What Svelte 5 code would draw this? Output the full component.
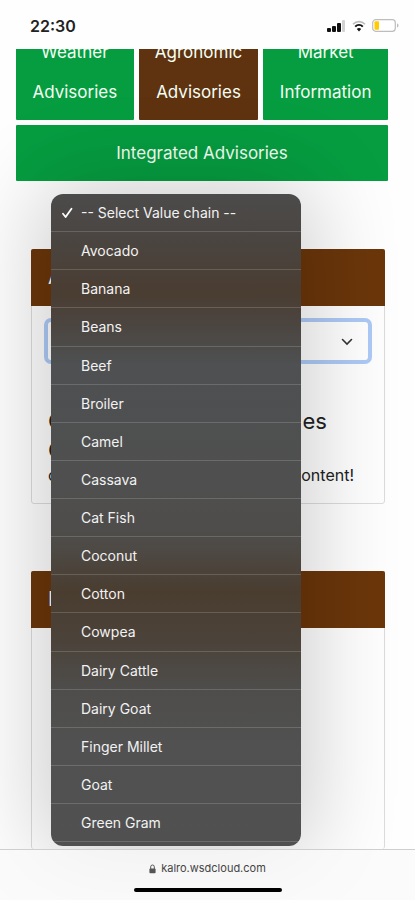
<script lang="ts">
    const options: string[] = [
        '-- Select Value chain --',
        'Avocado',
        'Banana',
        'Beans',
        'Beef',
        'Broiler',
        'Camel',
        'Cassava',
        'Cat Fish',
        'Coconut',
        'Cotton',
        'Cowpea',
        'Dairy Cattle',
        'Dairy Goat',
        'Finger Millet',
        'Goat',
        'Green Gram'
    ];

    let selected = options[0];
</script>

<div class="screen">
    <header class="status-bar">
        <time>22:30</time>
        <div class="status-icons">
            <svg width="19" height="12" viewBox="0 0 19 12" aria-hidden="true">
                <rect x="0" y="8" width="4" height="4" rx="1" fill="#111" />
                <rect x="5" y="6" width="4" height="6" rx="1" fill="#111" />
                <rect x="10" y="3" width="4" height="9" rx="1" fill="#111" />
                <rect x="15" y="0" width="3" height="12" rx="1" fill="#d2d2d2" />
            </svg>
            <svg width="14" height="12" viewBox="0 0 14 12" fill="none" aria-hidden="true">
                <path d="M1 4.2C4.4 .8 9.6 .8 13 4.2" stroke="#bbb" stroke-width="1.6" />
                <path d="M3.2 6.6c2.2-2.1 5.4-2.1 7.6 0" stroke="#111" stroke-width="2" />
                <path d="M4.8 9c1.3-1.2 3.1-1.2 4.4 0L7 11.4z" fill="#111" />
            </svg>
            <svg width="27" height="13" viewBox="0 0 27 13" aria-hidden="true">
                <rect x=".7" y=".7" width="22.6" height="11.6" rx="3" fill="#fff" stroke="#bdbdbd" stroke-width="1.2" />
                <rect x="2.5" y="2.3" width="4.5" height="8.4" rx="1" fill="#fc0" />
                <path d="M25 4.5c2 .6 2 3.4 0 4z" fill="#bdbdbd" />
            </svg>
        </div>
    </header>

    <main>
        <nav>
            <a class="tab" href="#weather">Weather Advisories</a>
            <a class="tab active" href="#agronomic">Agronomic Advisories</a>
            <a class="tab" href="#market">Market Information</a>
            <a class="tab wide" href="#integrated">Integrated Advisories</a>
        </nav>

        <section class="card">
            <h2>A</h2>
            <div class="card-body">
                <div class="select-wrap">
                    <select aria-label="Value chain" bind:value={selected}>
                        {#each options as option}
                            <option>{option}</option>
                        {/each}
                    </select>
                    <svg width="12" height="8" viewBox="0 0 12 8" fill="none" aria-hidden="true">
                        <path d="M1.5 1.5 6 6l4.5-4.5" stroke="#333" stroke-width="1.6" stroke-linecap="round" />
                    </svg>
                </div>
                <div class="guide">
                    <h3><span>C</span><span>es</span></h3>
                    <h3>C</h3>
                    <p><span>c</span><span>ontent!</span></p>
                </div>
            </div>
        </section>

        <section class="card grow">
            <h2>I</h2>
        </section>
    </main>

    <ul class="menu">
        {#each options as option}
            <li>
                <button aria-pressed={option === selected} on:click={() => (selected = option)}>
                    <span class="mark">
                        {#if option === selected}
                            <svg width="12" height="12" viewBox="0 0 12 12" fill="none" aria-hidden="true">
                                <path d="M2 6.8 4.6 10 10.5 1.8" stroke="#fff" stroke-width="1.8" stroke-linecap="round" stroke-linejoin="round" />
                            </svg>
                        {/if}
                    </span>
                    {option}
                </button>
            </li>
        {/each}
    </ul>

    <footer>
        <div class="address">
            <svg width="7" height="10" viewBox="0 0 7 10" aria-hidden="true">
                <path d="M1.7 5V2.8a1.8 1.8 0 0 1 3.6 0V5" fill="none" stroke="#555" />
                <rect x=".4" y="4.4" width="6.2" height="4.8" rx="1" fill="#555" />
            </svg>
            <span>kalro.wsdcloud.com</span>
        </div>
        <div class="home-indicator"></div>
    </footer>
</div>

<style>
    :global(body) {
        margin: 0;
        background: #fefefe;
    }

    .screen {
        position: relative;
        display: flex;
        flex-direction: column;
        min-height: 100vh;
        overflow: hidden;
        box-sizing: border-box;
        font-family: Inter, "Liberation Sans", sans-serif;
        color: #222;
    }

    .status-bar {
        position: relative;
        z-index: 3;
        display: flex;
        justify-content: space-between;
        align-items: center;
        height: 49px;
        padding: 2px 16px 0 30px;
        box-sizing: border-box;
        background: #fefefe;
    }

    time {
        font-size: 16px;
        font-weight: 600;
    }

    .status-icons {
        display: flex;
        align-items: center;
        gap: 6px;
    }

    main {
        flex: 1;
        display: flex;
        flex-direction: column;
        /* page is scrolled slightly under the status bar */
        margin-top: -25px;
    }

    nav {
        display: grid;
        grid-template-columns: 118fr 120fr 125fr;
        gap: 5px;
        padding: 0 27px 0 16px;
    }

    .tab {
        padding: 8px;
        border-radius: 1px;
        background: #069d40;
        color: #f4fff4;
        font-size: 17px;
        line-height: 40px;
        text-align: center;
        text-decoration: none;
    }

    .tab.active {
        background: #5f3310;
    }

    .tab.wide {
        grid-column: 1 / -1;
    }

    .card {
        margin: 68px 30px 0 31px;
        border: 1px solid #dcdcdc;
        border-radius: 3px;
    }

    .card.grow {
        flex: 1;
        margin-top: 67px;
        border-bottom: none;
    }

    h2 {
        margin: -1px -1px 0;
        padding: 0 17px;
        border-radius: 2px 2px 0 0;
        background: #6b360a;
        color: #fff;
        font-size: 20px;
        font-weight: 400;
        line-height: 57px;
    }

    .card-body {
        padding: 16px;
    }

    .select-wrap {
        position: relative;
        display: flex;
    }

    select {
        flex: 1;
        height: 38px;
        padding: 0 12px;
        appearance: none;
        border: none;
        border-radius: 3px;
        background: #fff;
        box-shadow: 0 0 0 4px #adcaf6;
        font: inherit;
        color: inherit;
    }

    .select-wrap svg {
        position: absolute;
        right: 15px;
        top: 16px;
    }

    .guide {
        padding: 47px 0 2px;
    }

    h3,
    p {
        display: flex;
        justify-content: space-between;
        margin: 0;
        font-weight: 400;
    }

    h3 {
        padding-right: 41px;
        font-size: 22px;
        line-height: 29px;
    }

    p {
        padding-right: 14px;
        font-size: 16px;
        line-height: 20px;
    }

    .menu {
        position: absolute;
        z-index: 1;
        top: 194px;
        bottom: 54px;
        left: 51px;
        width: 250px;
        display: flex;
        flex-direction: column;
        margin: 0;
        padding: 0 0 4px;
        box-sizing: border-box;
        list-style: none;
        border-radius: 12px;
        background: linear-gradient(
            #4c4b4b 0%,
            #4a443f 8%,
            #4a3d32 15%,
            #4b4540 20%,
            #4e5051 26%,
            #4f4f4f 45%,
            #4e4c49 53%,
            #4a3d30 61%,
            #4b4239 68%,
            #4e4d4b 76%,
            #515151 85%,
            #505050 100%
        );
        box-shadow: 0 0 90px 10px rgba(0, 0, 0, 0.2);
    }

    li {
        flex: 1;
        display: flex;
        border-bottom: 1px solid rgba(255, 255, 255, 0.16);
    }

    button {
        flex: 1;
        display: flex;
        align-items: center;
        padding: 0 10px;
        border: none;
        background: none;
        color: #f2f2f2;
        font-family: inherit;
        font-size: 14px;
        text-align: left;
        cursor: pointer;
    }

    .mark {
        display: flex;
        width: 20px;
    }

    footer {
        position: relative;
        z-index: 2;
        display: flex;
        flex-direction: column;
        align-items: center;
        gap: 11px;
        padding: 10px 0 8px;
        border-top: 1px solid #cfcfcf;
        background: rgba(250, 250, 249, 0.75);
    }

    .address {
        display: flex;
        align-items: center;
        gap: 5px;
        color: #444;
        font-size: 11px;
        line-height: 17px;
    }

    .home-indicator {
        width: 148px;
        height: 4px;
        border-radius: 2px;
        background: #000;
    }
</style>
